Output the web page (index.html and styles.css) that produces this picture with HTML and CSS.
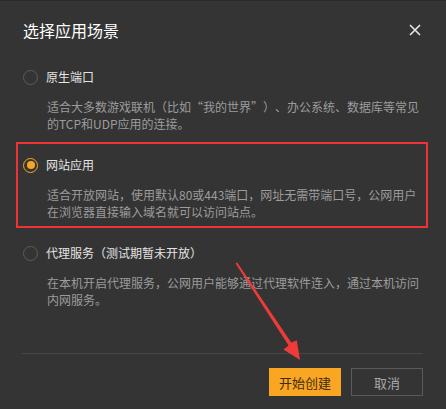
FILE: index.html
```html
<!DOCTYPE html>
<html lang="zh-CN">
<head>
    <meta charset="UTF-8">
    <meta name="viewport" content="width=device-width, initial-scale=1.0">
    <title>选择应用场景</title>
    <link rel="stylesheet" href="styles.css">
</head>
<body>
    <div class="dialog">
        <div class="dialog-header">
            <span class="dialog-title">选择应用场景</span>
            <button class="close" aria-label="关闭">
                <svg width="12" height="12" viewBox="0 0 12 12">
                    <path d="M1 1 L11 11 M11 1 L1 11" stroke="#e6e6e6" stroke-width="1.6" fill="none"/>
                </svg>
            </button>
        </div>

        <div class="options">
            <label class="option">
                <div class="option-row">
                    <span class="radio"></span>
                    <span class="option-name">原生端口</span>
                </div>
                <p class="option-desc">适合大多数游戏联机（比如“我的世界”）、办公系统、数据库等常见的TCP和UDP应用的连接。</p>
            </label>

            <label class="option highlight">
                <div class="option-row">
                    <span class="radio checked"></span>
                    <span class="option-name">网站应用</span>
                </div>
                <p class="option-desc">适合开放网站，使用默认80或443端口，网址无需带端口号，公网用户在浏览器直接输入域名就可以访问站点。</p>
            </label>

            <label class="option">
                <div class="option-row">
                    <span class="radio"></span>
                    <span class="option-name">代理服务（测试期暂未开放）</span>
                </div>
                <p class="option-desc">在本机开启代理服务，公网用户能够通过代理软件连入，通过本机访问内网服务。</p>
            </label>
        </div>

        <div class="dialog-footer">
            <button class="btn btn-primary">开始创建</button>
            <button class="btn btn-cancel">取消</button>
        </div>
    </div>

    <!-- arrow pointing at the create button -->
    <svg class="arrow" width="446" height="409" viewBox="0 0 446 409">
        <polygon points="236,262 237.2,261.6 291.2,341.6 296.8,339.6 300,359 283.4,348.4 288.6,344.4 235.6,262.6" fill="#f03a3a"/>
    </svg>
</body>
</html>
```

FILE: styles.css
```css
body {
    margin: 0;
    background-color: #343434;
    font-family: "Noto Sans CJK SC", sans-serif;
    width: 446px;
    height: 409px;
    overflow: hidden;
    position: relative;
    border-top: 1px solid #2b2b2b;
    box-sizing: border-box;
}

.dialog-header {
    display: flex;
    justify-content: space-between;
    align-items: center;
    padding: 19px 25px 14px 23px;
}

.dialog-title {
    font-size: 16px;
    line-height: 20px;
    color: #fff;
}

.close {
    background: none;
    border: none;
    padding: 0;
    width: 12px;
    height: 12px;
    display: flex;
    cursor: pointer;
}

.options {
    display: flex;
    flex-direction: column;
    gap: 2px;
}

.option {
    display: block;
    margin-left: 16px;
    width: 412px;
    box-sizing: border-box;
    border: 2px solid transparent;
    padding: 11px 0 6px 5px;
    cursor: pointer;
}

.option.highlight {
    border-color: #ee3236;
}

.option-row {
    display: flex;
    align-items: center;
    gap: 8px;
    height: 20px;
}

.radio {
    width: 15px;
    height: 15px;
    box-sizing: border-box;
    border: 1px solid #5c5c5c;
    border-radius: 50%;
    display: flex;
    align-items: center;
    justify-content: center;
}

.radio.checked {
    border: 1.5px solid #f6a623;
}

.radio.checked::after {
    content: "";
    width: 8px;
    height: 8px;
    border-radius: 50%;
    background-color: #f6a623;
}

.option-name {
    font-size: 12px;
    line-height: 20px;
    color: #e4e4e4;
    text-spacing-trim: space-all;
}

.option-desc {
    margin: 11px 0 0 24px;
    width: 375px;
    font-size: 12px;
    line-height: 17px;
    color: #9c9c9c;
    text-spacing-trim: space-all;
}

.dialog-footer {
    margin: 37px 23px 0 22px;
    border-top: 1px solid #464646;
    padding-top: 14px;
    display: flex;
    justify-content: flex-end;
    gap: 10px;
}

.btn {
    width: 72px;
    height: 28px;
    font-family: inherit;
    font-size: 13px;
    border-radius: 0;
    cursor: pointer;
    padding: 0;
}

.btn-primary {
    background-color: #f9a622;
    border: none;
    color: #3e2c0e;
}

.btn-cancel {
    background-color: transparent;
    border: 1px solid #5a5a5a;
    color: #a8a8a8;
}

.arrow {
    position: absolute;
    left: 0;
    top: 0;
    pointer-events: none;
}
```
